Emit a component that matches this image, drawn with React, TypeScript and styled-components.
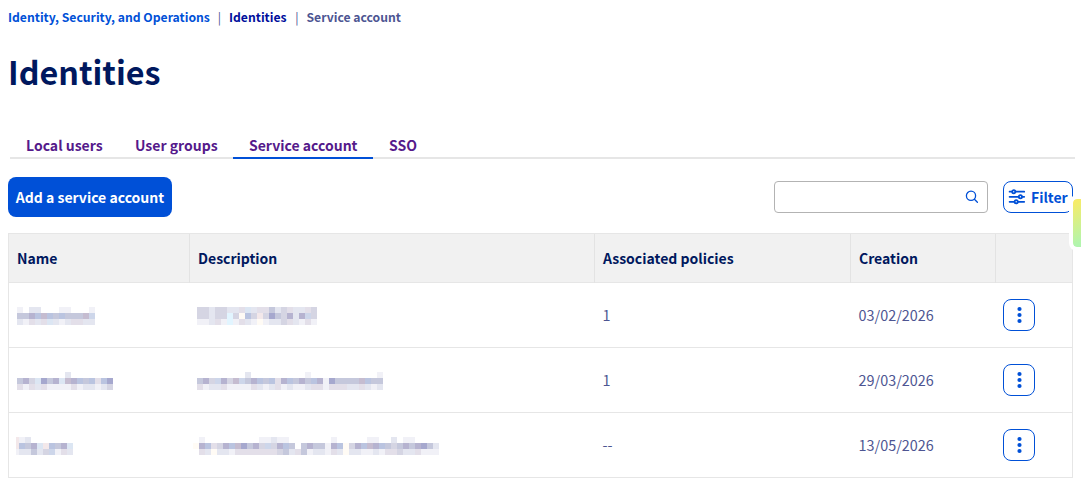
import React from "react";
import styled, { createGlobalStyle } from "styled-components";

const GlobalStyle = createGlobalStyle`
  * { box-sizing: border-box; }
  html, body { margin: 0; background: #fff; overflow: hidden; }
  body {
    font-family: "Noto Sans CJK JP", "Noto Sans", sans-serif;
    font-size: 14.4px;
    color: #4d5592;
  }
  button, input { font: inherit; }
`;

const Page = styled.main`
  position: relative;
  width: 1081px;
  height: 488px;
  padding: 0 8px;
  overflow: hidden;
  white-space: nowrap;
`;

const Breadcrumb = styled.nav`
  display: flex;
  height: 34px;
  font-size: 12.2px;
  line-height: 34px;
  font-weight: 700;
`;

const Crumb = styled.span<{ $color: string; $width?: number }>`
  width: ${(p) => (p.$width ? `${p.$width}px` : "auto")};
  color: ${(p) => p.$color};
`;

const Divider = styled.span`
  width: 19px;
  text-align: center;
  font-weight: 400;
`;

const Title = styled.h1`
  margin: 18px 0 0;
  height: 44px;
  line-height: 38px;
  font-size: 32.3px;
  font-weight: 700;
  color: #00185e;
`;

const Tabs = styled.div`
  display: flex;
  width: 1065px;
  height: 27px;
  margin: 36px 0 0 2px;
  box-shadow: inset 0 -2px #e6e6e6;
`;

const Tab = styled.a<{ $active?: boolean; $width: number }>`
  width: ${(p) => p.$width}px;
  padding-left: 16px;
  line-height: 27px;
  font-size: 14px;
  font-weight: 700;
  color: #551a8b;
  border-bottom: 2px solid ${(p) => (p.$active ? "#0050d7" : "transparent")};
`;

const Toolbar = styled.div`
  display: flex;
  align-items: center;
  height: 40px;
  margin-top: 18px;
`;

const AddButton = styled.button`
  width: 164px;
  height: 40px;
  padding: 0;
  border: 0;
  border-radius: 8px;
  background: #0050d7;
  color: #fff;
  font-size: 14px;
  font-weight: 700;
`;

const Search = styled.label`
  display: flex;
  align-items: center;
  width: 214px;
  height: 32px;
  margin-left: auto;
  padding-right: 8px;
  border: 1px solid #b3b3b3;
  border-radius: 4px;
`;

const SearchInput = styled.input`
  flex: 1;
  min-width: 0;
  border: 0;
  outline: 0;
  background: transparent;
`;

const FilterButton = styled.button`
  display: flex;
  align-items: center;
  gap: 5px;
  width: 70px;
  height: 32px;
  margin-left: 15px;
  padding: 0 0 0 4px;
  border: 1px solid #0050d7;
  border-radius: 8px;
  background: #fff;
  color: #0050d7;
  font-size: 14px;
  font-weight: 700;
`;

const Table = styled.section`
  width: 1065px;
  margin-top: 16px;
  border: 1px solid #e6e6e6;
`;

const Row = styled.div`
  display: grid;
  grid-template-columns: 180px 405px 256px 145px 77px;
  height: 65px;
  &:not(:last-child) { border-bottom: 1px solid #e6e6e6; }
  &:last-child { height: 64px; }
`;

const HeadRow = styled(Row)`
  height: 49px;
  background: #f1f1f1;
`;

const HeadCell = styled.div`
  padding-left: 8px;
  line-height: 49px;
  font-size: 14px;
  font-weight: 700;
  color: #00185e;
  & + & { border-left: 1px solid #e3e3e3; }
`;

const Cell = styled.div`
  display: flex;
  align-items: center;
  padding: 2px 0 0 8px;
`;

const TextCell = styled(Cell)`
  padding: 0 0 1px 8.6px;
`;

const MenuButton = styled.button`
  display: grid;
  place-items: center;
  width: 32px;
  height: 32px;
  margin-top: -2px;
  padding: 0;
  border: 1px solid #0050d7;
  border-radius: 8px;
  background: #fff;
`;

const Mosaic = styled.div<{ $shift: number }>`
  display: flex;
  flex-direction: column;
  margin-left: ${(p) => p.$shift}px;
`;

const MosaicLine = styled.div`
  display: flex;
  height: 6px;
`;

const Tile = styled.i<{ $color: string; $narrow?: boolean }>`
  flex: none;
  width: ${(p) => (p.$narrow ? 3 : 6)}px;
  height: 6px;
  background: ${(p) => p.$color};
`;

const Widget = styled.aside`
  position: absolute;
  left: 1069px;
  top: 195px;
  width: 20px;
  height: 56px;
  border: 4px solid #fff;
  border-radius: 8px;
  background: linear-gradient(155deg, #f6ec68 8%, #b2f5ae 88%) padding-box;
`;

const tones: Record<string, string> = {
  ".": "transparent",
  a: "#f1f1f7",
  b: "#e4e6f0",
  c: "#d5d5e3",
  d: "#c5c8dc",
  e: "#b6b3d0",
  f: "#a6a8ce",
  g: "#bac4e0",
  h: "#cdd6ea",
  i: "#dce6f3",
  j: "#e3dfe9",
  k: "#c5bcd0",
  l: "#fffbf5",
  m: "#e2f5ff",
  n: "#f3e8ea",
};

interface Redaction {
  lines: string[];
  shift?: number;
  narrowFirst?: boolean;
}

interface Account {
  name: Redaction;
  description: Redaction;
  policies: string;
  created: string;
}

const accounts: Account[] = [
  {
    name: { lines: ["a.bb...aa...a", "ddegkgdgdddkh", "bajbjibabjjbb"] },
    description: {
      lines: ["ccbccbbjibjjdbcjbbjc", "ccbccmclgcncfdcebehc", "aabjamajbalabbcjbaja"],
    },
    policies: "1",
    created: "03/02/2026",
  },
  {
    name: { lines: ["........b.......", "decifdeikegdgjgf", "jajbjaaaajabbabc"] },
    description: {
      lines: [
        "........b.........a...........a",
        "decheckhdegdgjegdedgeafddddkgdd",
        "jabbjaaaajbabjabaabjjajjjbbjbab",
      ],
    },
    policies: "1",
    created: "29/03/2026",
  },
  {
    name: { lines: ["nab.......", "ngdeingdei", "abbdbchajb"], shift: -1, narrowFirst: true },
    description: {
      lines: [
        ".a.........aabaa.......a.....aa..b.aa....",
        "legjcegkfdechcegd.deddaeglcegkegdcdedefdb",
        ".jblbbajjjjjjjcdbjdabbajblbbaabajjcbbjaaa",
      ].map((line) => line.slice(0, 41)),
      shift: -4,
    },
    policies: "--",
    created: "13/05/2026",
  },
];

const Redacted = ({ lines, shift = 0, narrowFirst }: Redaction) => (
  <Mosaic $shift={shift} aria-hidden>
    {lines.map((line, y) => (
      <MosaicLine key={y}>
        {[...line].map((tone, x) => (
          <Tile key={x} $color={tones[tone]} $narrow={narrowFirst && x === 0} />
        ))}
      </MosaicLine>
    ))}
  </Mosaic>
);

const SearchIcon = () => (
  <svg width="14" height="14" viewBox="0 0 14 14" fill="none" stroke="#0050d7" strokeWidth="1.3" strokeLinecap="round">
    <circle cx="6" cy="5.8" r="4.6" />
    <path d="M9.4 9.2 12.4 12.2" />
  </svg>
);

const FilterIcon = () => (
  <svg width="18" height="16" viewBox="0 0 18 16" fill="none" stroke="#0050d7" strokeWidth="1.8" strokeLinecap="round">
    <path d="M1.6 2.7H4M7.5 2.7H16.2M1.6 7.8H10.3M14.3 7.8H16.2M1.6 12.8H6.3M10 12.8H16.2" />
    <circle cx="5.8" cy="2.7" r="1.6" />
    <circle cx="12.4" cy="7.8" r="1.6" />
    <circle cx="8.2" cy="12.8" r="1.6" />
  </svg>
);

const DotsIcon = () => (
  <svg width="16" height="18" viewBox="0 0 16 18" fill="#0050d7">
    <circle cx="8.5" cy="3" r="2.1" />
    <circle cx="8.5" cy="9" r="2.1" />
    <circle cx="8.5" cy="15" r="2.1" />
  </svg>
);

export default function App() {
  return (
    <>
      <GlobalStyle />
      <Page>
        <Breadcrumb>
          <Crumb $color="#0050d7" $width={202}>Identity, Security, and Operations</Crumb>
          <Divider>|</Divider>
          <Crumb $color="#000e9c" $width={58.5}>Identities</Crumb>
          <Divider>|</Divider>
          <Crumb $color="#4d5592">Service account</Crumb>
        </Breadcrumb>
        <Title>Identities</Title>
        <Tabs>
          <Tab $width={109}>Local users</Tab>
          <Tab $width={114}>User groups</Tab>
          <Tab $width={140} $active>Service account</Tab>
          <Tab $width={60}>SSO</Tab>
        </Tabs>
        <Toolbar>
          <AddButton>Add a service account</AddButton>
          <Search>
            <SearchInput aria-label="Search" />
            <SearchIcon />
          </Search>
          <FilterButton>
            <FilterIcon />
            Filter
          </FilterButton>
        </Toolbar>
        <Table>
          <HeadRow>
            <HeadCell>Name</HeadCell>
            <HeadCell>Description</HeadCell>
            <HeadCell>Associated policies</HeadCell>
            <HeadCell>Creation</HeadCell>
            <HeadCell />
          </HeadRow>
          {accounts.map((account) => (
            <Row key={account.created}>
              <Cell><Redacted {...account.name} /></Cell>
              <Cell><Redacted {...account.description} /></Cell>
              <TextCell>{account.policies}</TextCell>
              <TextCell>{account.created}</TextCell>
              <Cell><MenuButton aria-label="Actions"><DotsIcon /></MenuButton></Cell>
            </Row>
          ))}
        </Table>
        <Widget />
      </Page>
    </>
  );
}
